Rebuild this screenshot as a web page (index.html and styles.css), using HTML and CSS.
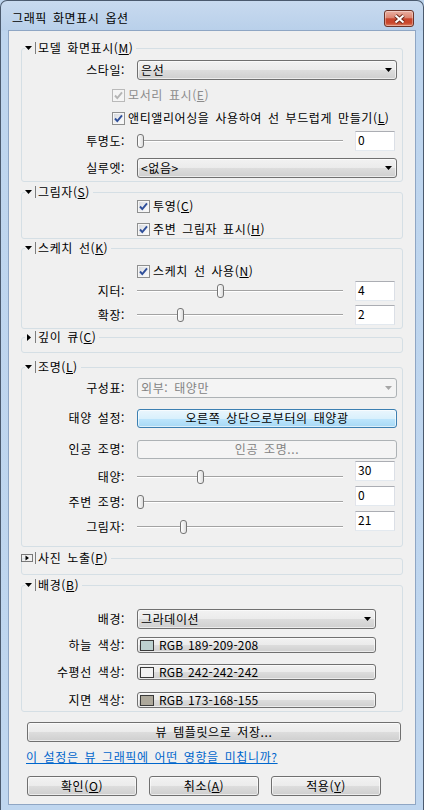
FILE: index.html
```html
<!DOCTYPE html>
<html lang="ko">
<head>
<meta charset="utf-8">
<title>그래픽 화면표시 옵션</title>
<link rel="stylesheet" href="styles.css">
</head>
<body>
<div class="window">
  <div class="titlebar">
    <span class="title">그래픽 화면표시 옵션</span>
    <span class="close"><svg width="13" height="10" viewBox="0 0 13 10"><path d="M2.5 1.5L10.5 8.5M10.5 1.5L2.5 8.5" stroke="#6b2a1c" stroke-width="4"/><path d="M2.5 1.5L10.5 8.5M10.5 1.5L2.5 8.5" stroke="#fff" stroke-width="2"/></svg></span>
  </div>
  <div class="client">

    <fieldset class="group mt10">
      <legend><span class="lg"><span class="exp"><svg width="7" height="4" viewBox="0 0 7 4"><path d="M0 0h7L3.5 4z"/></svg></span><span class="sep"></span><span>모델 화면표시(<u>M</u>)</span></span></legend>
      <div class="body pb3">
        <div class="row mt5"><span class="label">스타일:</span><div class="combo"><span class="value">은선</span><svg class="arrow" width="7" height="4" viewBox="0 0 7 4"><path d="M0 0h7L3.5 4z"/></svg></div></div>
        <div class="check-row in1 mt8"><span class="cb disabled"><svg width="9" height="9" viewBox="0 0 9 9"><path d="M1 4.5l2.3 2.6L8 1.3"/></svg></span><span class="dim">모서리 표시(<u>E</u>)</span></div>
        <div class="check-row in1 mt9"><span class="cb"><svg width="9" height="9" viewBox="0 0 9 9"><path d="M1 4.5l2.3 2.6L8 1.3"/></svg></span><span>앤티앨리어싱을 사용하여 선 부드럽게 만들기(<u>L</u>)</span></div>
        <div class="row mt6"><span class="label">투명도:</span><div class="slider"><div class="track"></div><span class="thumb" style="left:0px"></span></div><div class="edit">0</div></div>
        <div class="row mt7"><span class="label">실루엣:</span><div class="combo"><span class="value">&lt;없음&gt;</span><svg class="arrow" width="7" height="4" viewBox="0 0 7 4"><path d="M0 0h7L3.5 4z"/></svg></div></div>
      </div>
    </fieldset>

    <fieldset class="group mt3">
      <legend><span class="lg"><span class="exp"><svg width="7" height="4" viewBox="0 0 7 4"><path d="M0 0h7L3.5 4z"/></svg></span><span class="sep"></span><span>그림자(<u>S</u>)</span></span></legend>
      <div class="body pb2">
        <div class="check-row in2"><span class="cb"><svg width="9" height="9" viewBox="0 0 9 9"><path d="M1 4.5l2.3 2.6L8 1.3"/></svg></span><span>투영(<u>C</u>)</span></div>
        <div class="check-row in2 mt9"><span class="cb"><svg width="9" height="9" viewBox="0 0 9 9"><path d="M1 4.5l2.3 2.6L8 1.3"/></svg></span><span>주변 그림자 표시(<u>H</u>)</span></div>
      </div>
    </fieldset>

    <fieldset class="group mt2">
      <legend><span class="lg"><span class="exp"><svg width="7" height="4" viewBox="0 0 7 4"><path d="M0 0h7L3.5 4z"/></svg></span><span class="sep"></span><span>스케치 선(<u>K</u>)</span></span></legend>
      <div class="body pb3">
        <div class="check-row in2 mt9"><span class="cb"><svg width="9" height="9" viewBox="0 0 9 9"><path d="M1 4.5l2.3 2.6L8 1.3"/></svg></span><span>스케치 선 사용(<u>N</u>)</span></div>
        <div class="row mt3"><span class="label">지터:</span><div class="slider"><div class="track"></div><span class="thumb" style="left:80px"></span></div><div class="edit">4</div></div>
        <div class="row mt4"><span class="label">확장:</span><div class="slider"><div class="track"></div><span class="thumb" style="left:40px"></span></div><div class="edit">2</div></div>
      </div>
    </fieldset>

    <fieldset class="group mt1">
      <legend><span class="lg"><span class="exp"><svg width="4" height="7" viewBox="0 0 4 7"><path d="M0 0l4 3.5L0 7z"/></svg></span><span class="sep"></span><span>깊이 큐(<u>C</u>)</span></span></legend>
      <div class="body h8"></div>
    </fieldset>

    <fieldset class="group mt7">
      <legend><span class="lg"><span class="exp"><svg width="7" height="4" viewBox="0 0 7 4"><path d="M0 0h7L3.5 4z"/></svg></span><span class="sep"></span><span>조명(<u>L</u>)</span></span></legend>
      <div class="body pb15">
        <div class="row mt4"><span class="label">구성표:</span><div class="combo disabled"><span class="value">외부: 태양만</span><svg class="arrow" width="7" height="4" viewBox="0 0 7 4"><path d="M0 0h7L3.5 4z"/></svg></div></div>
        <div class="row mt10"><span class="label">태양 설정:</span><div class="btn hot wide">오른쪽 상단으로부터의 태양광</div></div>
        <div class="row mt11"><span class="label">인공 조명:</span><div class="btn disabled wide">인공 조명...</div></div>
        <div class="row low mt2"><span class="label">태양:</span><div class="slider"><div class="track"></div><span class="thumb" style="left:60px"></span></div><div class="edit">30</div></div>
        <div class="row low mt5"><span class="label">주변 조명:</span><div class="slider"><div class="track"></div><span class="thumb" style="left:0px"></span></div><div class="edit">0</div></div>
        <div class="row low mt5"><span class="label">그림자:</span><div class="slider"><div class="track"></div><span class="thumb" style="left:43px"></span></div><div class="edit">21</div></div>
      </div>
    </fieldset>

    <fieldset class="group mt4">
      <legend><span class="lg"><span class="exp focus"><svg width="12" height="8" viewBox="0 0 12 8"><rect x="0.5" y="0.5" width="11" height="7" fill="none" stroke="#000" stroke-dasharray="1 1"/><path d="M4.5 1.5L8 4L4.5 6.5z"/></svg></span><span class="sep"></span><span>사진 노출(<u>P</u>)</span></span></legend>
      <div class="body h9"></div>
    </fieldset>

    <fieldset class="group mt3">
      <legend><span class="lg"><span class="exp"><svg width="7" height="4" viewBox="0 0 7 4"><path d="M0 0h7L3.5 4z"/></svg></span><span class="sep"></span><span>배경(<u>B</u>)</span></span></legend>
      <div class="body pb3">
        <div class="row mt17"><span class="label">배경:</span><div class="combo short"><span class="value">그라데이션</span><svg class="arrow" width="7" height="4" viewBox="0 0 7 4"><path d="M0 0h7L3.5 4z"/></svg></div></div>
        <div class="row color-row mt8"><span class="label">하늘 색상:</span><div class="colorbtn"><span class="swatch" style="background:rgb(189,209,208)"></span>RGB 189-209-208</div></div>
        <div class="row color-row mt11"><span class="label">수평선 색상:</span><div class="colorbtn"><span class="swatch" style="background:rgb(242,242,242)"></span>RGB 242-242-242</div></div>
        <div class="row color-row mt12"><span class="label">지면 색상:</span><div class="colorbtn"><span class="swatch" style="background:rgb(173,168,155)"></span>RGB 173-168-155</div></div>
      </div>
    </fieldset>

    <div class="btn save mt10">뷰 템플릿으로 저장...</div>
    <a class="link mt8" href="#">이 설정은 뷰 그래픽에 어떤 영향을 미칩니까?</a>
    <div class="buttons mt12">
      <div class="btn action">확인(<u>O</u>)</div>
      <div class="btn action">취소(<u>A</u>)</div>
      <div class="btn action">적용(<u>Y</u>)</div>
    </div>
  </div>
</div>
</body>
</html>
```

FILE: styles.css
```css
* { box-sizing: border-box; }
html, body { margin: 0; padding: 0; }
body {
  width: 424px;
  height: 810px;
  overflow: hidden;
  font-family: "Noto Sans CJK KR", "Noto Sans", sans-serif;
  font-size: 12px;
  line-height: 14px;
  color: #000;
  background: #bdd4ed;
  letter-spacing: 0.6px;
  word-spacing: 2px;
}
u { text-decoration: underline; text-underline-offset: 1px; }

.window {
  width: 424px;
  height: 810px;
  display: flex;
  flex-direction: column;
  border: 1px solid #4b5a6e;
  border-bottom: 0;
  border-radius: 7px 7px 0 0;
  background: linear-gradient(#c8daef 0, #b9d0ea 29px, #bed5ee 30px, #bfd6ef 100%);
  padding: 0 7px 5px 7px;
}
.titlebar {
  flex: none;
  height: 29px;
  display: flex;
  align-items: flex-start;
  padding: 9px 2px 0 4px;
}
.title { margin-top: 1px; line-height: 14px; }
.close {
  margin-left: auto;
  width: 30px;
  height: 17px;
  border: 1px solid #6d3328;
  border-radius: 3px;
  background: linear-gradient(#eab0a2 0%, #dc8571 45%, #c8442c 52%, #c9472c 80%, #e0866a 100%);
  box-shadow: inset 0 0 0 1px rgba(255, 255, 255, 0.35);
  display: flex;
  align-items: center;
  justify-content: center;
}

.client {
  flex: 1;
  display: flex;
  flex-direction: column;
  background: #f0f0f0;
  border: 1px solid #8fa6c4;
}

.group {
  margin-left: 12px;
  margin-right: 12px;
  padding: 0;
  min-width: 0;
  border: 1px solid #d5dfe5;
  border-radius: 3px;
}
.group legend {
  margin-left: 3px;
  padding: 0 3px 0 0;
  height: 14px;
  line-height: 14px;
}
.lg { display: flex; align-items: center; height: 14px; white-space: nowrap; }
.exp { width: 7px; height: 14px; display: flex; align-items: center; justify-content: center; flex: none; }
.exp svg { fill: #000; display: block; }
.exp.focus { width: 12px; margin-left: -4px; }
.sep { flex: none; width: 1px; height: 12px; background: #7d7d7d; margin: 0 2px 0 3px; }
.exp.focus + .sep { margin-left: 2px; }

.body { display: flex; flex-direction: column; padding-right: 5px; }
.h8 { height: 8px; }
.h9 { height: 9px; }

.row { display: flex; align-items: center; height: 20px; flex: none; }
.row.color-row { height: 16px; }
.row.low { align-items: flex-start; }
.row.low .label, .row.low .slider { margin-top: 9px; }
.label {
  flex: none;
  width: 103px;
  margin-right: 12px;
  text-align: right;
  white-space: nowrap;
}

.check-row { display: flex; align-items: center; height: 14px; flex: none; white-space: nowrap; }
.check-row.in1 { padding-left: 90px; }
.check-row.in2 { padding-left: 115px; }
.cb {
  flex: none;
  width: 13px;
  height: 13px;
  margin-right: 3px;
  border: 1px solid #8e8f8f;
  background: linear-gradient(135deg, #d3d6db 0%, #f0f1f3 60%, #fdfdfd 100%);
  box-shadow: inset 0 0 0 1px #f6f6f6;
  display: flex;
  align-items: center;
  justify-content: center;
}
.cb svg path { fill: none; stroke: #2f4f9a; stroke-width: 1.9; }
.cb.disabled { border-color: #b9b9b9; background: #f4f4f4; box-shadow: none; }
.cb.disabled svg path { stroke: #b4b4b4; }
.dim { color: #8c8c8c; }

.combo {
  flex: none;
  width: 260px;
  height: 20px;
  display: flex;
  align-items: center;
  padding: 0 4px 0 3px;
  border: 1px solid #707070;
  border-radius: 3px;
  background: linear-gradient(#f2f2f2 0%, #ebebeb 50%, #dddddd 50%, #cfcfcf 100%);
  box-shadow: inset 0 0 0 1px rgba(255, 255, 255, 0.6);
  white-space: nowrap;
}
.combo.short { width: 239px; }
.combo .value { flex: 1; }
.combo .arrow { flex: none; fill: #000; display: block; }
.combo.disabled {
  border-color: #adb2b5;
  background: #f4f4f4;
  box-shadow: none;
  color: #838383;
}
.combo.disabled .arrow { fill: #a6a6a6; }

.btn {
  flex: none;
  height: 20px;
  display: flex;
  align-items: center;
  justify-content: center;
  border: 1px solid #707070;
  border-radius: 3px;
  background: linear-gradient(#f2f2f2 0%, #ebebeb 50%, #dddddd 50%, #cfcfcf 100%);
  box-shadow: inset 0 0 0 1px rgba(255, 255, 255, 0.6);
  white-space: nowrap;
}
.btn.wide { width: 260px; height: 19px; }
.btn.hot {
  border-color: #3c7fb1;
  background: linear-gradient(#eaf6fd 0%, #d9f0fc 50%, #bee6fd 50%, #a7d9f5 100%);
}
.btn.disabled {
  border-color: #adb2b5;
  background: #f4f4f4;
  box-shadow: none;
  color: #838383;
}
.btn.save { margin-left: 18px; width: 374px; }
.btn.action { width: 110px; }
.buttons { display: flex; gap: 12px; margin-left: 18px; flex: none; }

.colorbtn {
  flex: none;
  width: 239px;
  height: 16px;
  display: flex;
  align-items: center;
  padding-left: 2px;
  border: 1px solid #707070;
  border-radius: 3px;
  background: linear-gradient(#f2f2f2 0%, #ebebeb 50%, #dddddd 50%, #cfcfcf 100%);
  box-shadow: inset 0 0 0 1px rgba(255, 255, 255, 0.6);
  white-space: nowrap;
  letter-spacing: 0.2px;
  word-spacing: 1px;
}
.swatch { flex: none; width: 14px; height: 11px; border: 1px solid #3a3a3a; margin-right: 5px; }

.slider { position: relative; flex: none; width: 206px; height: 14px; padding-top: 6px; }
.track { height: 2px; border-top: 1px solid #a3a3a3; border-bottom: 1px solid #ffffff; }
.thumb {
  position: absolute;
  top: 0;
  width: 7px;
  height: 14px;
  border: 1px solid #767676;
  border-radius: 3px;
  background: linear-gradient(90deg, #ffffff 0%, #ececec 60%, #dcdcdc 100%);
}
.edit {
  flex: none;
  width: 40px;
  height: 20px;
  margin-left: 12px;
  padding: 0 2px;
  background: #fff;
  border: 1px solid #dbdfe6;
  border-top-color: #abadb3;
  border-left-color: #e2e3ea;
  border-bottom-color: #e3e9ef;
  line-height: 15px;
  letter-spacing: 0;
}

.link {
  flex: none;
  align-self: flex-start;
  margin-left: 17px;
  height: 14px;
  color: #0066cc;
  text-decoration: underline;
}

.mt1 { margin-top: 1px; }
.mt2 { margin-top: 2px; }
.mt3 { margin-top: 3px; }
.mt4 { margin-top: 4px; }
.mt5 { margin-top: 5px; }
.mt6 { margin-top: 6px; }
.mt7 { margin-top: 7px; }
.mt8 { margin-top: 8px; }
.mt9 { margin-top: 9px; }
.mt10 { margin-top: 10px; }
.mt11 { margin-top: 11px; }
.mt12 { margin-top: 12px; }
.mt17 { margin-top: 17px; }
.pb2 { padding-bottom: 2px; }
.pb3 { padding-bottom: 3px; }
.pb15 { padding-bottom: 15px; }
```
